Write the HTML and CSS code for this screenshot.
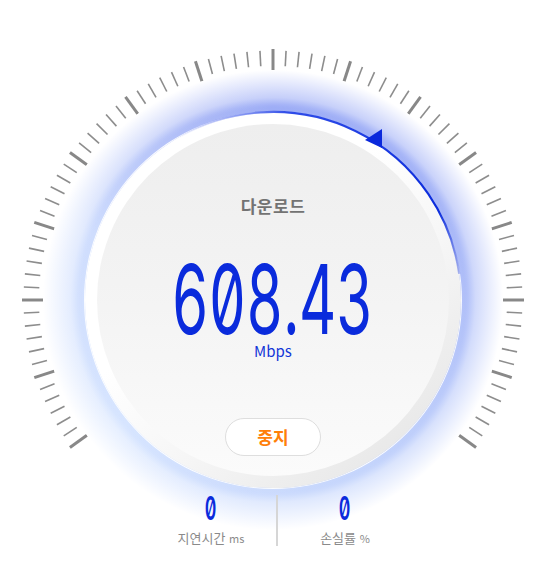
FILE: index.html
```html
<!DOCTYPE html>
<html lang="ko">
<head>
<meta charset="utf-8">
<title>속도 측정</title>
<link rel="stylesheet" href="styles.css">
</head>
<body>
<div class="gauge">
  <svg class="ticks" width="502" height="502" viewBox="0 0 502 502">
    <defs>
      <line id="s" x1="251" y1="1.5" x2="251" y2="17" class="tick-s"/>
      <line id="l" x1="251" y1="0" x2="251" y2="21" class="tick-l"/>
      <g id="grp">
        <use href="#l"/>
        <use href="#s" transform="rotate(3 251 251)"/>
        <use href="#s" transform="rotate(6 251 251)"/>
        <use href="#s" transform="rotate(9 251 251)"/>
        <use href="#s" transform="rotate(12 251 251)"/>
        <use href="#s" transform="rotate(15 251 251)"/>
      </g>
    </defs>
    <use href="#grp" transform="rotate(-126 251 251)"/>
    <use href="#grp" transform="rotate(-108 251 251)"/>
    <use href="#grp" transform="rotate(-90 251 251)"/>
    <use href="#grp" transform="rotate(-72 251 251)"/>
    <use href="#grp" transform="rotate(-54 251 251)"/>
    <use href="#grp" transform="rotate(-36 251 251)"/>
    <use href="#grp" transform="rotate(-18 251 251)"/>
    <use href="#grp"/>
    <use href="#grp" transform="rotate(18 251 251)"/>
    <use href="#grp" transform="rotate(36 251 251)"/>
    <use href="#grp" transform="rotate(54 251 251)"/>
    <use href="#grp" transform="rotate(72 251 251)"/>
    <use href="#grp" transform="rotate(90 251 251)"/>
    <use href="#grp" transform="rotate(108 251 251)"/>
    <use href="#l" transform="rotate(126 251 251)"/>
  </svg>

  <div class="glow"></div>

  <div class="disc">
    <div class="face">
      <div class="title">다운로드</div>
      <div class="speed">608.43</div>
      <div class="unit">Mbps</div>
      <button class="stop" type="button">중지</button>
    </div>
  </div>

  <svg class="overlay" width="502" height="502" viewBox="0 0 502 502">
    <defs>
      <linearGradient id="arcfade" gradientUnits="userSpaceOnUse" x1="157" y1="88" x2="437" y2="225">
        <stop offset="0" stop-color="#1a3ae6" stop-opacity="0"/>
        <stop offset="0.28" stop-color="#1a3ae6" stop-opacity="0.9"/>
        <stop offset="0.85" stop-color="#0a2bdc" stop-opacity="1"/>
        <stop offset="1" stop-color="#0a2bdc" stop-opacity="0.3"/>
      </linearGradient>
    </defs>
    <path class="arc" d="M157 88.2 A188 188 0 0 1 437.2 224.8"/>
    <polygon class="pointer" points="343,91 360,80 360,99"/>
  </svg>

  <div class="stats">
    <div class="stat">
      <div class="stat-value">0</div>
      <div class="stat-label">지연시간 <span class="stat-unit">ms</span></div>
    </div>
    <div class="divider"></div>
    <div class="stat">
      <div class="stat-value">0</div>
      <div class="stat-label">손실률 <span class="stat-unit">%</span></div>
    </div>
  </div>
</div>
</body>
</html>
```

FILE: styles.css
```css
html, body {
  margin: 0;
  padding: 0;
  background: #ffffff;
}

body {
  font-family: "Noto Sans CJK KR", "Noto Sans", sans-serif;
}

.gauge {
  display: grid;
  grid-template-columns: 502px;
  grid-template-rows: 502px;
  margin: 49px 0 0 22px;
  width: 502px;
}

.gauge > * {
  grid-area: 1 / 1;
}

.ticks,
.overlay {
  display: block;
}

.overlay {
  pointer-events: none;
}

.tick-s {
  stroke: #8d8d8d;
  stroke-width: 1.6;
}

.tick-l {
  stroke: #888888;
  stroke-width: 3;
}

.arc {
  fill: none;
  stroke: url(#arcfade);
  stroke-width: 2.2;
}

.pointer {
  fill: #0a28dc;
}

/* soft halo: light azure on the left, saturated blue on the right */
.glow {
  place-self: center;
  width: 460px;
  height: 460px;
  border-radius: 50%;
  background:
    radial-gradient(circle at 50% 50%,
      rgba(255, 255, 255, 0) 40%,
      rgba(255, 255, 255, 1) 50%);
}

.glow {
  background:
    radial-gradient(closest-side,
      rgba(255, 255, 255, 0) 80%,
      rgba(255, 255, 255, 0.6) 88%,
      #ffffff 100%),
    conic-gradient(from 0deg,
      #6f86f2 0deg,
      #7d93f4 60deg,
      #a8c0fb 150deg,
      #c4d9ff 230deg,
      #b8cdfd 290deg,
      #8296f3 340deg,
      #6f86f2 360deg);
}

.disc {
  place-self: center;
  width: 376px;
  height: 376px;
  box-sizing: border-box;
  padding: 12px;
  border-radius: 50%;
  background: linear-gradient(140deg, #ffffff 40%, #f6f6f6 62%, #e8e8e8 88%);
  box-shadow:
    0 0 0 1px rgba(255, 255, 255, 0.9),
    0 0 6px 2px rgba(255, 255, 255, 0.35);
}

.face {
  width: 352px;
  height: 352px;
  border-radius: 50%;
  background: linear-gradient(180deg, #eeeeee 0%, #f3f3f3 45%, #fbfbfb 100%);
  display: flex;
  flex-direction: column;
  align-items: center;
  box-sizing: border-box;
  padding-top: 70px;
}

.title {
  font-size: 17px;
  line-height: 24px;
  font-weight: 700;
  color: #737373;
  letter-spacing: 0.5px;
}

.speed {
  margin-top: 41px;
  font-family: "Inter", "Noto Sans", sans-serif;
  font-feature-settings: "zero" 1, "tnum" 1;
  font-size: 96px;
  line-height: 80px;
  font-weight: 400;
  color: #0a2bdc;
  transform: scaleX(0.6);
  white-space: nowrap;
}

.unit {
  margin-top: 2px;
  font-size: 15px;
  line-height: 20px;
  color: #1436d8;
}

.stop {
  margin-top: 57px;
  width: 96px;
  height: 38px;
  border: 1px solid #dedede;
  border-radius: 19px;
  background: #ffffff;
  color: #ff7f0a;
  font-family: "Noto Sans CJK KR", "Noto Sans", sans-serif;
  font-size: 17px;
  font-weight: 700;
  padding: 0;
  line-height: 36px;
}

.stats {
  align-self: end;
  justify-self: start;
  margin: 0 0 4px 124px;
  display: grid;
  grid-template-columns: 130px 2px 134px;
}

.stat {
  display: flex;
  flex-direction: column;
  align-items: center;
}

.stat-value {
  font-family: "Inter", "Noto Sans", sans-serif;
  font-feature-settings: "zero" 1;
  font-size: 32px;
  line-height: 30px;
  font-weight: 600;
  color: #0a2bdc;
  transform: scaleX(0.55);
}

.stat-label {
  margin-top: 5px;
  font-size: 13px;
  line-height: 18px;
  color: #8a8a8a;
  white-space: nowrap;
}

.stat-unit {
  font-size: 11px;
}

.divider {
  background: #d6d6d6;
  margin: 1px 0;
}
```
